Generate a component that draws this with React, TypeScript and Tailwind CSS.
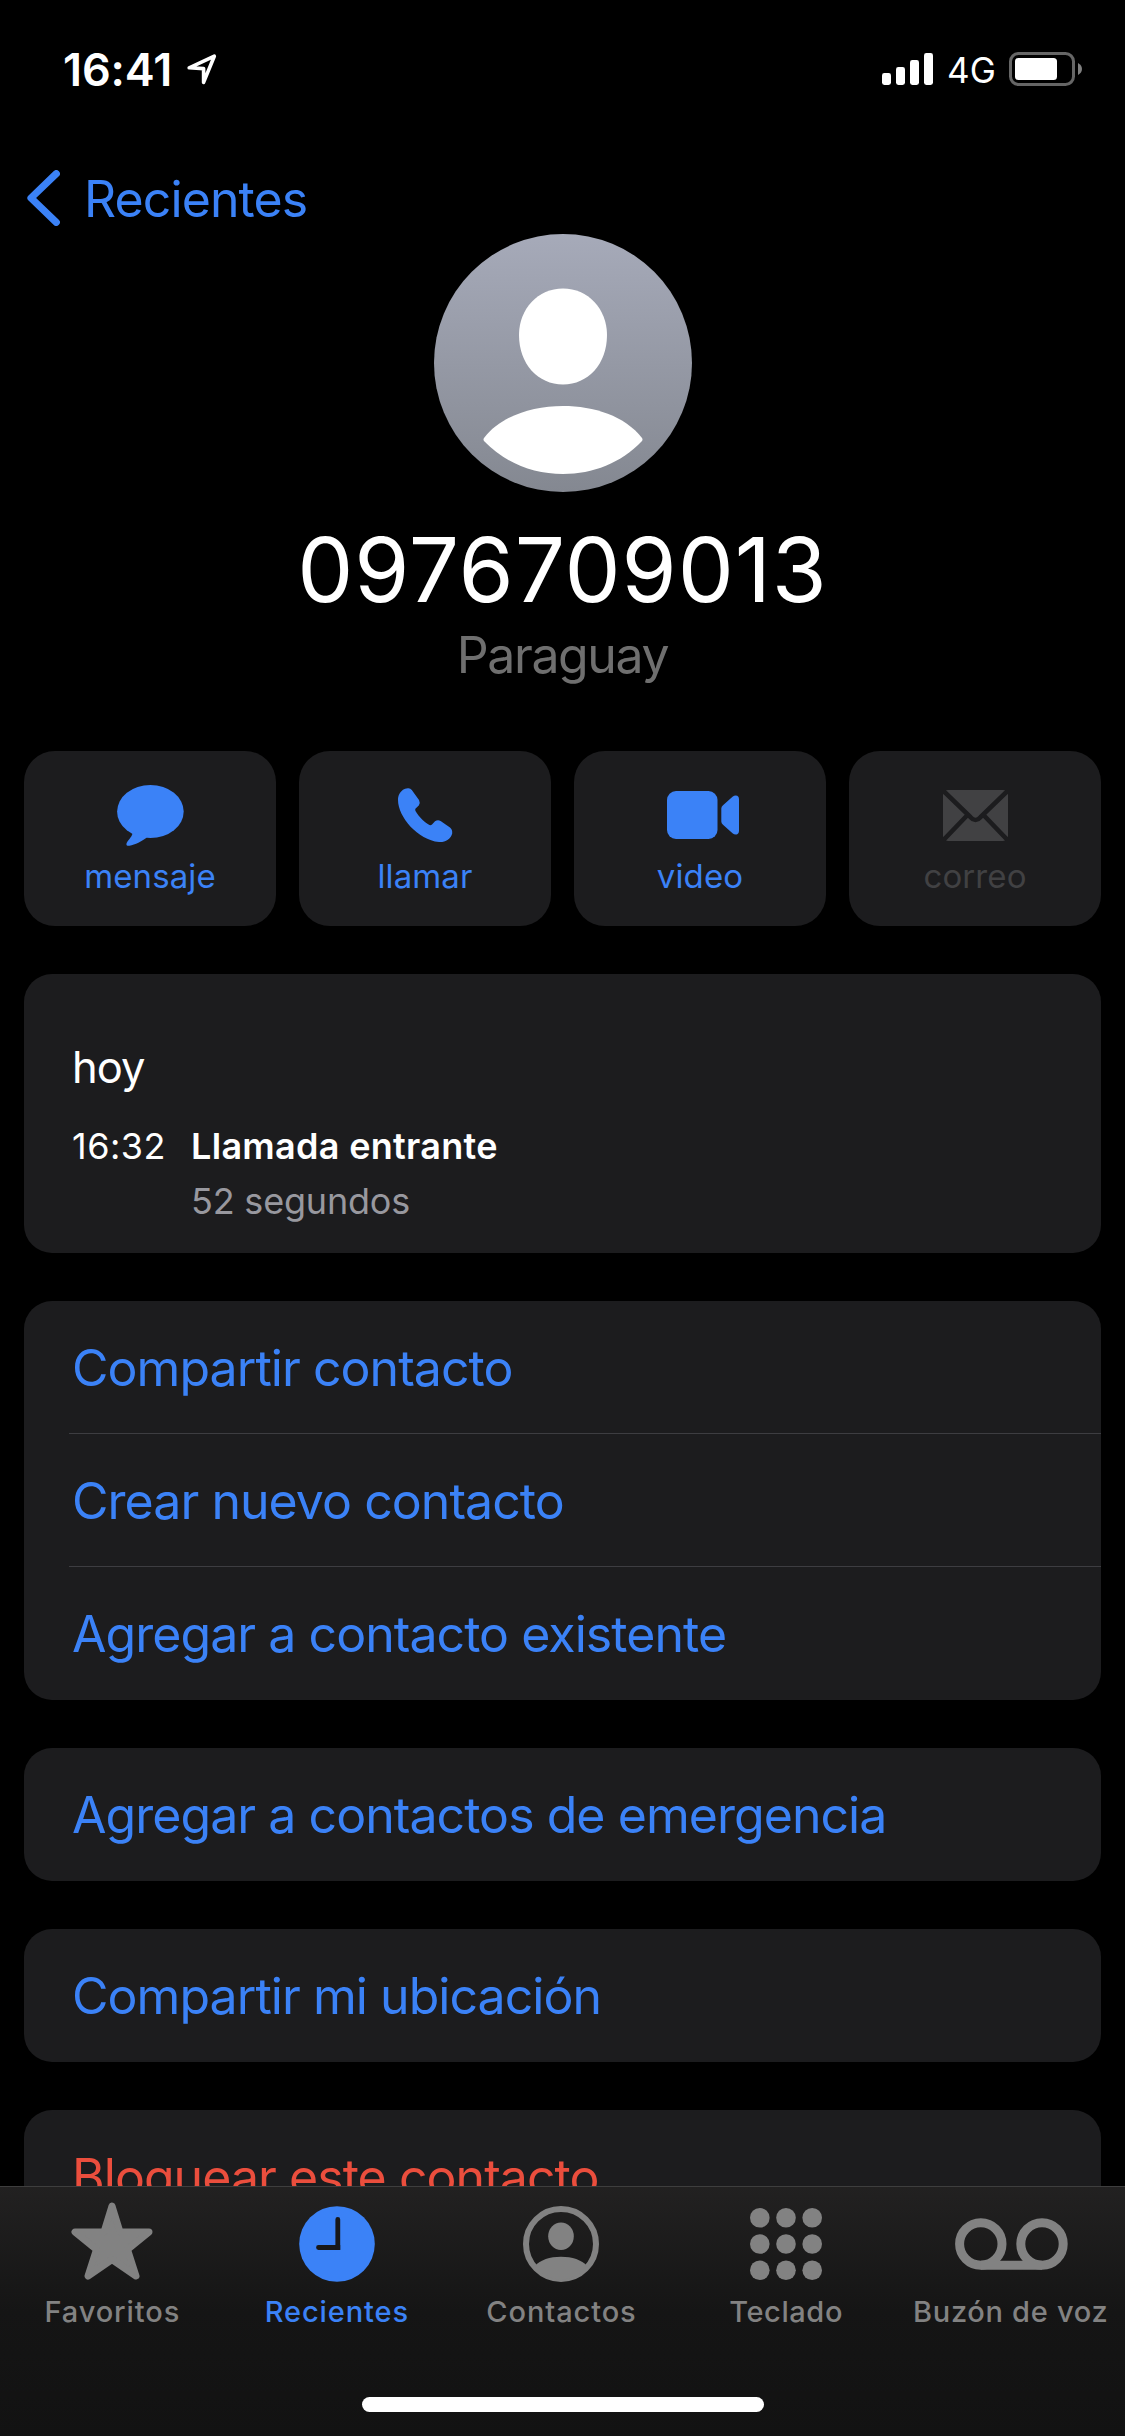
import React from "react";

interface ActionItem {
  label: string;
  icon: React.ReactNode;
  disabled?: boolean;
}

interface TabItem {
  label: string;
  icon: React.ReactNode;
  labelClass: string;
  active?: boolean;
}

const MessageIcon = () => (
  <svg width="67" height="61" viewBox="0 0 67 61" fill="currentColor">
    <ellipse cx="33.4" cy="26.6" rx="33.3" ry="26.5" />
    <path d="M15.5 48.5C15 52 10 56 9.4 59C9.4 60.8 10.6 61 12.5 60.8C18 60 25 56 29.5 52.8L31 46Z" />
  </svg>
);

const PhoneIcon = () => (
  <svg width="55" height="55" viewBox="0 0 55 55" fill="currentColor">
    <path d="M0 12C0 7 2 4 5 1.7Q7 0 10.5 .2Q12.5 .2 13.8 2L21 12Q22.6 15 20.8 17.4L17.6 20.6Q16.8 21.8 17.5 23C21 29 27 35 31.5 37Q32.8 37.5 34 36.5L37 33.3Q39.8 31.4 42.6 33L52 39.5Q54.6 41.5 54.2 45.5C53 51 47 54.5 41 54C20 52 0 29 0 12Z" />
  </svg>
);

const VideoIcon = () => (
  <svg width="73" height="48" viewBox="0 0 73 48" fill="currentColor" className="ml-[6px]">
    <rect width="50.5" height="48" rx="9" />
    <path d="M54.3 17.5Q54.3 15.5 56 14.2L65.5 5.7Q68 3.8 70.3 4.8Q72 5.6 72 8V40Q72 42.4 70.3 43.2Q68 44.2 65.5 42.3L56 33.8Q54.3 32.5 54.3 30.5Z" />
  </svg>
);

const MailIcon = () => (
  <svg width="65" height="51" viewBox="0 0 65 51" fill="none">
    <rect width="65" height="51" rx="5" fill="currentColor" />
    <path
      d="M-1 -.5L27.5 27.2Q32.5 32.8 37.5 27.2L66 -.5M24.5 25L-1 51.5M40.5 25L66 51.5"
      stroke="#1c1c1e"
      strokeWidth="4.6"
    />
  </svg>
);

const StarIcon = () => (
  <svg width="82" height="78" viewBox="0 0 82 78" className="-mt-[7px]">
    <path
      d="M41 4L49 30H78L56.5 47.5L65 74L41 57.5L17 74L25.5 47.5L4 30H33Z"
      fill="currentColor"
      stroke="currentColor"
      strokeWidth="7"
      strokeLinejoin="round"
    />
  </svg>
);

const ClockIcon = () => (
  <svg width="76" height="76" viewBox="0 0 76 76" fill="none">
    <circle cx="38" cy="38" r="37.8" fill="currentColor" />
    <path d="M38.8 13.5V41.5H19.5" stroke="#181818" strokeWidth="4.8" strokeLinecap="round" />
    <path d="M36.4 38.9H41.2V43.9H36.4Z" fill="#181818" />
  </svg>
);

const ContactIcon = () => (
  <svg width="76" height="76" viewBox="0 0 76 76" fill="none">
    <circle cx="38" cy="38" r="35" stroke="currentColor" strokeWidth="6" />
    <ellipse cx="38" cy="30.3" rx="12.8" ry="13.8" fill="currentColor" />
    <path
      d="M12 60C17 54 27 50.8 38 50.8S59 54 64 60C57 68 48 73.5 38 73.5S19 68 12 60Z"
      fill="currentColor"
    />
  </svg>
);

const KeypadIcon = () => (
  <svg width="72" height="72" viewBox="0 0 72 72" fill="currentColor">
    {[9.8, 36, 62.2].map((cy) =>
      [9.8, 36, 62.2].map((cx) => <circle key={`${cx}-${cy}`} cx={cx} cy={cy} r="9.8" />)
    )}
  </svg>
);

const VoicemailIcon = () => (
  <svg
    width="113"
    height="52"
    viewBox="0 0 113 52"
    fill="none"
    stroke="currentColor"
    strokeWidth="9"
    className="ml-[2px]"
  >
    <circle cx="25.8" cy="26" r="21.2" />
    <circle cx="87" cy="26" r="21.2" />
    <path d="M25.8 47.2H87" />
  </svg>
);

const actions: ActionItem[] = [
  { label: "mensaje", icon: <MessageIcon /> },
  { label: "llamar", icon: <PhoneIcon /> },
  { label: "video", icon: <VideoIcon /> },
  { label: "correo", icon: <MailIcon />, disabled: true },
];

const groups: { label: string; danger?: boolean }[][] = [
  [
    { label: "Compartir contacto" },
    { label: "Crear nuevo contacto" },
    { label: "Agregar a contacto existente" },
  ],
  [{ label: "Agregar a contactos de emergencia" }],
  [{ label: "Compartir mi ubicación" }],
  [{ label: "Bloquear este contacto", danger: true }],
];

const tabs: TabItem[] = [
  { label: "Favoritos", icon: <StarIcon />, labelClass: "tracking-[0.9px]" },
  { label: "Recientes", icon: <ClockIcon />, labelClass: "tracking-[0.9px]", active: true },
  { label: "Contactos", icon: <ContactIcon />, labelClass: "tracking-[0.9px]" },
  { label: "Teclado", icon: <KeypadIcon />, labelClass: "tracking-[0.6px]" },
  { label: "Buzón de voz", icon: <VoicemailIcon />, labelClass: "tracking-[0.7px]" },
];

const StatusBar = () => (
  <div className="flex h-[138px] shrink-0 items-center justify-between pl-[63px] pr-[43px]">
    <div className="flex items-center gap-[15px]">
      <span className="text-[45px] leading-none font-semibold tracking-[-0.1px]">16:41</span>
      <svg width="30" height="31" viewBox="0 0 30 31" fill="none">
        <path
          d="M2.200 13.800L27.300 2.200L16.600 28.400V14.600Z"
          stroke="white"
          strokeWidth="3.6"
          strokeLinejoin="round"
        />
      </svg>
    </div>
    <div className="flex items-center">
      <svg width="51" height="32" viewBox="0 0 51 32" fill="white">
        <rect x="0" y="20" width="9" height="12" rx="2.4" />
        <rect x="14" y="14" width="9" height="18" rx="2.4" />
        <rect x="28" y="7" width="9" height="25" rx="2.4" />
        <rect x="42" y="0" width="9" height="32" rx="2.4" />
      </svg>
      <span className="ml-[14px] w-[62px] pt-0.5 text-[35px] leading-none tracking-[0.2px]">4G</span>
      <svg width="73" height="34" viewBox="0 0 73 34" fill="none">
        <rect x="1.5" y="1.5" width="63" height="31" rx="8" stroke="#666" strokeWidth="3" />
        <rect x="6" y="6" width="42" height="22" rx="3.5" fill="white" />
        <path d="M69 11C71.5 12.3 73 14.5 73 17S71.5 21.7 69 23Z" fill="#808080" />
      </svg>
    </div>
  </div>
);

const Avatar = () => (
  <svg width="258" height="258" viewBox="0 0 258 258" className="shrink-0">
    <defs>
      <linearGradient id="avatar" x1="0" y1="0" x2="0" y2="1">
        <stop offset="0" stopColor="#a6aab9" />
        <stop offset="1" stopColor="#848891" />
      </linearGradient>
    </defs>
    <circle cx="129" cy="129" r="129" fill="url(#avatar)" />
    <path
      d="M129 54.5C154 54.5 173 75 173 101C173 130 154 150.5 129 150.5S85 130 85 101C85 75 104 54.5 129 54.5Z"
      fill="white"
    />
    <path
      d="M50 204C67 182 98 172 129 172S191 182 208 204Q209 205.500 208 207C187 229 159 240 129 240S71 229 50 207Q49 205.500 50 204Z"
      fill="white"
    />
  </svg>
);

export default function App() {
  return (
    <div className="flex h-[2436px] w-[1125px] flex-col overflow-hidden bg-black font-['Inter',sans-serif] text-white">
      <main className="flex h-[2186px] shrink-0 flex-col overflow-hidden">
        <StatusBar />

        <button className="flex h-24 shrink-0 items-center gap-6 pt-6 pl-[27px] text-[#3b82f7]">
          <svg width="33" height="56" viewBox="0 0 33 56" fill="none">
            <path
              d="M29.300 3.700L4 28L29.300 52.300"
              stroke="currentColor"
              strokeWidth="7.200"
              strokeLinecap="round"
              strokeLinejoin="round"
            />
          </svg>
          <span className="pt-0.5 text-[50px] leading-none tracking-[-0.9px]">Recientes</span>
        </button>

        <div className="flex shrink-0 flex-col items-center">
          <Avatar />
          <h1 className="mt-7 text-[89px] leading-[100px] tracking-[0.9px]">0976709013</h1>
          <p className="mt-[5px] text-[50px] leading-[60px] tracking-[-1.4px] text-[#6f6f6f]">
            Paraguay
          </p>
        </div>

        <div className="mt-[66px] flex flex-col gap-12 px-6">
          <div className="grid shrink-0 grid-cols-4 gap-[23px]">
            {actions.map((item) => (
              <button
                key={item.label}
                disabled={item.disabled}
                className={`flex h-[175px] flex-col items-center rounded-[31px] bg-[#1c1c1e] pt-[29px] ${
                  item.disabled ? "text-[#414143]" : "text-[#3b82f7]"
                }`}
              >
                <span className="flex h-[70px] items-center">{item.icon}</span>
                <span className="mt-1.5 text-[33px] leading-10 tracking-[0.1px]">
                  {item.label}
                </span>
              </button>
            ))}
          </div>

          <section className="h-[279px] shrink-0 rounded-[28px] bg-[#1c1c1e] pt-[67px] pl-12">
            <h2 className="text-[43.5px] leading-[52px] tracking-[-1px]">hoy</h2>
            <div className="mt-[26px] flex text-[36px] leading-[55px]">
              <span className="w-[119px] tracking-[0.5px]">16:32</span>
              <div>
                <p className="font-semibold tracking-[0.3px]">Llamada entrante</p>
                <p className="tracking-[-0.2px] text-[#98989f]">52 segundos</p>
              </div>
            </div>
          </section>

          {groups.map((group) => (
            <ul
              key={group[0].label}
              className="shrink-0 overflow-hidden rounded-[28px] bg-[#1c1c1e] pl-[45px]"
            >
              {group.map((row, i) => (
                <li
                  key={row.label}
                  className={`flex h-[133px] items-center pt-0.5 pl-[3px] text-[50px] tracking-[-0.95px] ${
                    i < group.length - 1 ? "border-b border-[#3d3d41]" : ""
                  } ${row.danger ? "text-[#eb4e3d]" : "text-[#3b82f7]"}`}
                >
                  {row.label}
                </li>
              ))}
            </ul>
          ))}
        </div>
      </main>

      <footer className="flex h-[250px] shrink-0 flex-col items-center border-t border-[#3e3e3e] bg-linear-to-b from-[#222121] via-[#151515] to-[#121212]">
        <nav className="grid w-full grid-cols-5 pr-[2px]">
          {tabs.map((tab) => (
            <button
              key={tab.label}
              className={`flex flex-col items-center ${
                tab.active ? "text-[#3b82f7]" : "text-[#828282]"
              }`}
            >
              <span className="flex h-[114px] items-center">{tab.icon}</span>
              <span
                className={`-mt-[9px] text-[29px] leading-10 font-medium whitespace-nowrap ${tab.labelClass}`}
              >
                {tab.label}
              </span>
            </button>
          ))}
        </nav>
        <div className="mt-[65px] h-[15px] w-[402px] rounded-full bg-white" />
      </footer>
    </div>
  );
}
